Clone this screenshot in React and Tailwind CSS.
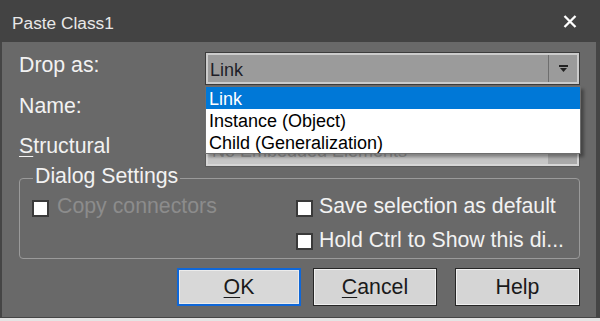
export default function App() {
  return (
    <div className="w-[600px] h-[321px] bg-[#e4e4e4] font-['Liberation_Sans',Arial,sans-serif]">
      <div className="h-[318px] bg-[#454545] flex flex-col">
        <div className="h-[42px] shrink-0 bg-[#434343] flex items-center justify-between pl-[12px] pr-[23px]">
          <span className="text-[17.3px] leading-[17px] text-[#e8e8e8] pt-[4px]">Paste Class1</span>
          <svg width="14" height="13" viewBox="0 0 14 13" className="mt-[1px]">
            <path d="M1.5 1 L12.5 12 M12.5 1 L1.5 12" stroke="#ffffff" strokeWidth="2.3" />
          </svg>
        </div>
        <div className="flex-1 ml-[2px] mr-[4px] mb-[1px] bg-[#696969] flex flex-col pt-[10px] pl-[17px] text-[21.3px] leading-[21px] text-[#f2f2f2]">
          <div className="grid grid-cols-[186px_375px] gap-y-[8px]">
            <div className="pt-[3px]">Drop as:</div>
            <div className="relative h-[33px]">
              <div className="h-[33px] flex border border-[#3c3c3c] bg-[#9b9b9b] shadow-[inset_0_0_0_2px_#cbcbcb] p-[2px]">
                <div className="flex-1 flex items-center pl-[2px] pt-[2px] text-[18px] leading-[18px] text-[#1e1e28]">Link</div>
                <div className="w-[29px] border-l border-[#6e6e6e] flex items-center justify-center">
                  <svg width="9" height="7" viewBox="0 0 9 7">
                    <path d="M0 0h9v2H0z M1 3h7L4.5 7z" fill="#222222" />
                  </svg>
                </div>
              </div>
              <div className="absolute z-10 left-0 top-[34px] w-[376px] bg-white border border-[#6e6e6e] shadow-[3px_3px_3px_rgba(0,0,0,0.35)] text-[18px] leading-[20px] text-black">
                <div className="h-[22px] pt-[2px] pl-[3px] bg-[#0078d7] text-white">Link</div>
                <div className="h-[22px] pt-[2px] pl-[3px]">Instance (Object)</div>
                <div className="h-[22px] pt-[2px] pl-[3px]">Child (Generalization)</div>
              </div>
            </div>
            <div className="pt-[3px]">Name:</div>
            <div className="h-[33px] border border-[#3c3c3c] bg-[#c6c6c6]"></div>
            <div className="pt-[2px]">
              <span className="underline decoration-1 underline-offset-[3px]">S</span>tructural
            </div>
            <div className="h-[33px] flex border border-[#5a5a5a] bg-[#c6c6c6] shadow-[inset_0_0_0_2px_#d6d6d6] p-[2px] overflow-hidden">
              <div className="flex-1 flex items-center pl-[4px] text-[18px] leading-[18px] text-[#9a9a9a]">No Embedded Elements</div>
              <div className="w-[29px] bg-[#a9a9a9]"></div>
            </div>
          </div>
          <fieldset className="mt-[-1px] w-[561px] border border-[#9a9a9a] rounded-[4px] p-0 pb-[7px]">
            <legend className="ml-[13px] px-[2px] pb-[4px] leading-[21px]">Dialog Settings</legend>
            <div className="grid grid-cols-[264px_1fr] gap-y-[13px] pl-[12px] pt-[5px]">
              <div className="flex items-start">
                <div className="w-[17px] h-[17px] mt-[4px] border-2 border-[#3a3a3a] bg-white shrink-0"></div>
                <span className="ml-[8px] text-[#8c8c8c]">Copy connectors</span>
              </div>
              <div className="flex items-start">
                <div className="w-[17px] h-[17px] mt-[4px] border-2 border-[#3a3a3a] bg-white shrink-0"></div>
                <span className="ml-[6px]">Save selection as default</span>
              </div>
              <div></div>
              <div className="flex items-start">
                <div className="w-[17px] h-[17px] mt-[3px] border-2 border-[#3a3a3a] bg-white shrink-0"></div>
                <span className="ml-[6px]">Hold Ctrl to Show this di...</span>
              </div>
            </div>
          </fieldset>
          <div className="mt-[9px] mr-[16px] flex justify-end text-[#1a1a1a]">
            <button className="w-[124px] h-[38px] border-2 border-[#0f67d8] bg-[#d8d8d8] shadow-[inset_0_0_0_1px_#ececec] flex items-center justify-center">
              <span className="underline decoration-1 underline-offset-[3px]">O</span>K
            </button>
            <button className="ml-[12px] w-[124px] h-[38px] border border-[#262626] bg-[#d5d5d5] shadow-[inset_0_0_0_1px_#f0f0f0] flex items-center justify-center">
              <span className="underline decoration-1 underline-offset-[3px]">C</span>ancel
            </button>
            <button className="ml-[18px] w-[125px] h-[38px] border border-[#262626] bg-[#d5d5d5] shadow-[inset_0_0_0_1px_#f0f0f0] flex items-center justify-center">
              Help
            </button>
          </div>
        </div>
      </div>
    </div>
  );
}
